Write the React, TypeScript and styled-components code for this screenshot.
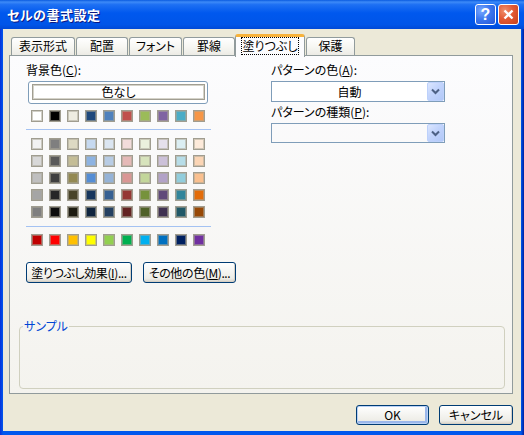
import React from "react";
import styled, { createGlobalStyle } from "styled-components";

const GlobalStyle = createGlobalStyle`
  html, body {
    margin: 0;
    padding: 0;
    background: #ffffff;
  }
  * {
    box-sizing: border-box;
  }
  body {
    font-family: "Noto Sans CJK JP", "Noto Sans", sans-serif;
    font-size: 12px;
    font-feature-settings: "palt";
    color: #000000;
  }
`;

const Window = styled.div`
  width: 524px;
  height: 435px;
  display: flex;
  flex-direction: column;
  background: linear-gradient(to right, #0831d9 0px, #0058ee 3px, #0058ee 521px, #001ea0 524px);
  overflow: hidden;
`;

const TitleBar = styled.div`
  height: 29px;
  flex: none;
  display: flex;
  align-items: center;
  padding: 0 5px 0 7px;
  background: linear-gradient(
    to bottom,
    #0a5be0 0%,
    #3d8af7 7%,
    #1e70f3 16%,
    #0058ee 45%,
    #0055e8 85%,
    #0049d6 100%
  );
`;

const Title = styled.div`
  flex: 1;
  color: #ffffff;
  font-weight: 700;
  font-size: 13px;
  letter-spacing: 0.5px;
  text-shadow: 1px 1px 0 #0a1883;
`;

const CaptionButton = styled.div<{ $kind: "help" | "close" }>`
  width: 21px;
  height: 21px;
  margin-left: 2px;
  border: 1px solid #ffffff;
  border-radius: 3px;
  display: flex;
  align-items: center;
  justify-content: center;
  color: #ffffff;
  font-family: "Liberation Sans", sans-serif;
  font-weight: 700;
  font-size: 16px;
  background: ${(p) =>
    p.$kind === "close"
      ? "radial-gradient(circle at 30% 30%, #f0906c 0%, #e35a34 45%, #c6411c 100%)"
      : "radial-gradient(circle at 30% 30%, #7aa8ff 0%, #3d78ef 45%, #2456d6 100%)"};
`;

const Client = styled.div`
  flex: 1;
  margin: 0 3px 4px 3px;
  padding: 5px 8px 0 6px;
  background: #ece9d8;
  display: flex;
  flex-direction: column;
`;

const TabRow = styled.div`
  height: 21px;
  display: flex;
  align-items: flex-end;
  gap: 1px;
  padding-left: 2px;
`;

const Tab = styled.div<{ $w: number; $active?: boolean }>`
  width: ${(p) => p.$w}px;
  height: ${(p) => (p.$active ? 23 : 18)}px;
  margin-bottom: ${(p) => (p.$active ? -2 : 0)}px;
  margin-left: ${(p) => (p.$active ? -1 : 0)}px;
  position: relative;
  z-index: ${(p) => (p.$active ? 2 : 0)};
  border: 1px solid #919b9c;
  border-bottom: none;
  border-top: ${(p) => (p.$active ? "3px solid #f7b23b" : "1px solid #919b9c")};
  border-radius: 3px 3px 0 0;
  background: ${(p) =>
    p.$active ? "#fcfcfe" : "linear-gradient(to bottom, #ffffff 0%, #f7f7f3 50%, #ecebe5 100%)"};
  display: flex;
  justify-content: center;
  padding-top: 1px;
  line-height: 14px;
  white-space: nowrap;
`;

const FocusText = styled.span`
  outline: 1px dotted #000000;
  outline-offset: 0px;
  padding: 0 1px;
  height: 16px;
  line-height: 15px;
`;

const Panel = styled.div`
  height: 339px;
  border: 1px solid #919b9c;
  background: linear-gradient(to bottom, #fcfcfe 0%, #f4f3ee 100%);
  display: flex;
  flex-direction: column;
  padding: 7px 7px 4px 9px;
  position: relative;
  z-index: 1;
`;

const Columns = styled.div`
  display: grid;
  grid-template-columns: 252px 174px;
`;

const LeftColumn = styled.div`
  padding-left: 7px;
  display: flex;
  flex-direction: column;
  align-items: flex-start;
`;

const RightColumn = styled.div`
  display: flex;
  flex-direction: column;
`;

const Label = styled.div<{ $mt?: number }>`
  line-height: 14px;
  height: 14px;
  margin-top: ${(p) => p.$mt ?? 0}px;
  white-space: nowrap;
`;

const NoColorButton = styled.div`
  width: 180px;
  height: 23px;
  margin: 4px 0 0 2px;
  border: 1px solid #7f9db9;
  border-radius: 3px;
  padding: 2px 2px 3px 3px;
  background: #ffffff;
  display: flex;
`;

const NoColorInner = styled.div`
  flex: 1;
  border: 1px solid #a19e92;
  box-shadow: inset 0 0 0 1px #d5d3c9;
  display: flex;
  align-items: center;
  justify-content: center;
  line-height: 14px;
`;

const SwatchGrid = styled.div<{ $mt: number }>`
  display: grid;
  grid-template-columns: repeat(10, 12px);
  column-gap: 6px;
  row-gap: 5px;
  margin: ${(p) => p.$mt}px 0 0 5px;
`;

const Swatch = styled.span<{ $c: string }>`
  width: 12px;
  height: 12px;
  background: ${(p) => p.$c};
  border: 1px solid #a09d90;
  box-shadow: inset 0 0 0 1px rgba(172, 168, 153, 0.55);
`;

const Divider = styled.div<{ $mt: number }>`
  width: 185px;
  height: 1px;
  margin-top: ${(p) => p.$mt}px;
  background: #a4c2f2;
`;

const ButtonRow = styled.div`
  display: flex;
  gap: 11px;
  margin-top: 16px;
`;

const XPButton = styled.div<{ $w: number; $h?: number; $default?: boolean; $tight?: boolean }>`
  width: ${(p) => p.$w}px;
  height: ${(p) => p.$h ?? 21}px;
  border: 1px solid #003c74;
  border-radius: 3px;
  background: linear-gradient(to bottom, #ffffff 0%, #f6f6f3 40%, #eeede7 80%, #d8d3c9 100%);
  box-shadow: ${(p) =>
    p.$default
      ? "inset 0 0 0 1px #b9d1f6, inset -1px -1px 0 2px #9bb7ea"
      : "inset -1px -1px 0 #d6d0c5"};
  display: flex;
  align-items: center;
  justify-content: center;
  white-space: nowrap;
  line-height: 14px;
  letter-spacing: ${(p) => (p.$tight ? "-0.4px" : "0")};
`;

const Dropdown = styled.div<{ $h: number; $plain?: boolean }>`
  width: 174px;
  height: ${(p) => p.$h}px;
  margin-top: 4px;
  border: 1px solid #7f9db9;
  background: ${(p) => (p.$plain ? "transparent" : "#ffffff")};
  display: flex;
`;

const DropdownValue = styled.div`
  flex: 1;
  text-align: center;
  line-height: 19px;
`;

const DropArrow = styled.div`
  width: 17px;
  border: 1px solid #bdd1fb;
  border-radius: 2px;
  background: linear-gradient(135deg, #dbe6fe 0%, #c2d4fc 45%, #b2c8f8 100%);
  display: flex;
  align-items: center;
  justify-content: center;
`;

const Group = styled.fieldset`
  margin: auto 0 0 0;
  padding: 0;
  height: 70px;
  min-width: 0;
  border: 1px solid #d0d0bf;
  border-radius: 4px;
`;

const GroupLegend = styled.legend`
  margin-left: 3px;
  padding: 0 1px;
  color: #0046d5;
  line-height: 14px;
  font-size: 12px;
`;

const Footer = styled.div`
  display: flex;
  justify-content: flex-end;
  gap: 10px;
  margin-top: 11px;
`;

const tabs = [
  { label: "表示形式", w: 64 },
  { label: "配置", w: 52 },
  { label: "フォント", w: 53 },
  { label: "罫線", w: 52 },
  { label: "塗りつぶし", w: 70, active: true },
  { label: "保護", w: 49 },
];

const themeRow = [
  "#ffffff", "#000000", "#eeece1", "#1f497d", "#4f81bd",
  "#c0504d", "#9bbb59", "#8064a2", "#4bacc6", "#f79646",
];

const tints = [
  "#f2f2f2", "#7f7f7f", "#ddd9c3", "#c6d9f0", "#dbe5f1", "#f2dcdb", "#ebf1dd", "#e5e0ec", "#dbeef3", "#fdeada",
  "#d8d8d8", "#595959", "#c4bd97", "#8db3e2", "#b8cce4", "#e5b9b7", "#d7e3bc", "#ccc1d9", "#b7dde8", "#fbd5b5",
  "#bfbfbf", "#3f3f3f", "#938953", "#548dd4", "#95b3d7", "#d99694", "#c3d69b", "#b2a2c7", "#92cddc", "#fac08f",
  "#a5a5a5", "#262626", "#494429", "#17365d", "#366092", "#953734", "#76923c", "#5f497a", "#31859b", "#e36c09",
  "#7f7f7f", "#0c0c0c", "#1d1b10", "#0f243e", "#244061", "#632423", "#4f6128", "#3f3151", "#205867", "#974806",
];

const standard = [
  "#c00000", "#ff0000", "#ffc000", "#ffff00", "#92d050",
  "#00b050", "#00b0f0", "#0070c0", "#002060", "#7030a0",
];

const Chevron = () => (
  <svg width="9" height="7" viewBox="0 0 9 7">
    <path d="M1 1.5 L4.5 5 L8 1.5" fill="none" stroke="#4d6185" strokeWidth="2" />
  </svg>
);

const App: React.FC = () => {
  return (
    <>
      <GlobalStyle />
      <Window>
        <TitleBar>
          <Title>セルの書式設定</Title>
          <CaptionButton $kind="help">?</CaptionButton>
          <CaptionButton $kind="close">
            <svg width="11" height="11" viewBox="0 0 11 11">
              <path d="M1.5 1.5 L9.5 9.5 M9.5 1.5 L1.5 9.5" stroke="#ffffff" strokeWidth="2.4" />
            </svg>
          </CaptionButton>
        </TitleBar>
        <Client>
          <TabRow>
            {tabs.map((t) => (
              <Tab key={t.label} $w={t.w} $active={t.active}>
                {t.active ? <FocusText>{t.label}</FocusText> : t.label}
              </Tab>
            ))}
          </TabRow>
          <Panel>
            <Columns>
              <LeftColumn>
                <Label>
                  背景色(<u>C</u>):
                </Label>
                <NoColorButton>
                  <NoColorInner>色なし</NoColorInner>
                </NoColorButton>
                <SwatchGrid $mt={6}>
                  {themeRow.map((c, i) => (
                    <Swatch key={i} $c={c} />
                  ))}
                </SwatchGrid>
                <Divider $mt={7} />
                <SwatchGrid $mt={8}>
                  {tints.map((c, i) => (
                    <Swatch key={i} $c={c} />
                  ))}
                </SwatchGrid>
                <Divider $mt={8} />
                <SwatchGrid $mt={7}>
                  {standard.map((c, i) => (
                    <Swatch key={i} $c={c} />
                  ))}
                </SwatchGrid>
                <ButtonRow>
                  <XPButton $w={106} $tight>
                    塗りつぶし効果(<u>I</u>)...
                  </XPButton>
                  <XPButton $w={93} $tight>
                    その他の色(<u>M</u>)...
                  </XPButton>
                </ButtonRow>
              </LeftColumn>
              <RightColumn>
                <Label>
                  パターンの色(<u>A</u>):
                </Label>
                <Dropdown $h={21}>
                  <DropdownValue>自動</DropdownValue>
                  <DropArrow>
                    <Chevron />
                  </DropArrow>
                </Dropdown>
                <Label $mt={3}>
                  パターンの種類(<u>P</u>):
                </Label>
                <Dropdown $h={20} $plain>
                  <DropdownValue />
                  <DropArrow>
                    <Chevron />
                  </DropArrow>
                </Dropdown>
              </RightColumn>
            </Columns>
            <Group>
              <GroupLegend>サンプル</GroupLegend>
            </Group>
          </Panel>
          <Footer>
            <XPButton $w={73} $h={20} $default>
              OK
            </XPButton>
            <XPButton $w={74} $h={20}>
              キャンセル
            </XPButton>
          </Footer>
        </Client>
      </Window>
    </>
  );
};

export default App;
